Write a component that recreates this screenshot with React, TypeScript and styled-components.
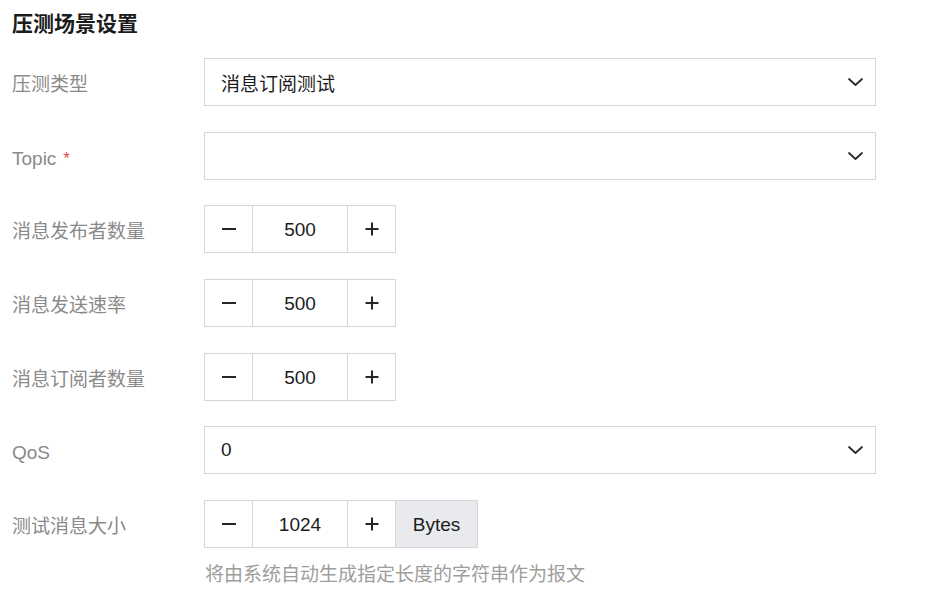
import React from "react";
import styled, { createGlobalStyle } from "styled-components";

const Global = createGlobalStyle`
  html, body { margin: 0; padding: 0; background: #ffffff; }
  body {
    font-family: "Liberation Sans", "Noto Sans CJK SC", sans-serif;
    -webkit-font-smoothing: antialiased;
  }
  * { box-sizing: border-box; }
`;

const Page = styled.div`
  width: 944px;
  height: 610px;
  padding: 9px 0 0 12px;
  background: #fff;
  overflow: hidden;
`;

const Title = styled.h2`
  margin: 0;
  font-size: 21px;
  line-height: 30px;
  font-weight: 700;
  color: #1b1b1b;
`;

const Form = styled.div`
  display: flex;
  flex-direction: column;
  gap: 25.67px;
  margin-top: 19px;
`;

const Row = styled.div`
  display: grid;
  grid-template-columns: 192px 672px;
  align-items: start;
`;

const Label = styled.div`
  font-size: 19px;
  line-height: 48px;
  height: 48px;
  padding-top: 3px;
  color: #8a8a8a;
  white-space: nowrap;
`;

const Required = styled.span`
  color: #e34d4d;
  margin-left: 7px;
  font-size: 17px;
  vertical-align: 1px;
`;

const Control = styled.div`
  display: flex;
  flex-direction: column;
`;

const Select = styled.div`
  height: 48px;
  width: 672px;
  border: 1px solid #d3d5db;
  display: flex;
  align-items: center;
  justify-content: space-between;
  padding: 0 11px 0 16px;
  font-size: 19px;
  color: #1c1c1c;
  background: #fff;
`;

const Stepper = styled.div`
  display: flex;
  height: 48px;
  border: 1px solid #d3d5db;
  width: max-content;
`;

const StepBtn = styled.div`
  width: 47px;
  height: 46px;
  display: flex;
  align-items: center;
  justify-content: center;
  color: #262626;
`;

const StepValue = styled.div`
  width: 96px;
  height: 46px;
  padding-top: 2px;
  border-left: 1px solid #d3d5db;
  border-right: 1px solid #d3d5db;
  display: flex;
  align-items: center;
  justify-content: center;
  font-size: 19px;
  color: #1c1c1c;
`;

const Addon = styled.div`
  width: 82px;
  height: 46px;
  padding-top: 2px;
  border-left: 1px solid #d3d5db;
  background: #e9eaee;
  display: flex;
  align-items: center;
  justify-content: center;
  font-size: 19px;
  color: #1c1c1c;
`;

const Help = styled.div`
  margin-top: 14px;
  font-size: 19px;
  line-height: 26px;
  color: #9d9d9d;
  padding-left: 1px;
`;

const Chevron = () => (
  <svg width="17" height="10" viewBox="0 0 17 10" fill="none">
    <path d="M2 2 L8.5 8 L15 2" stroke="#2a2a2a" strokeWidth="1.8" strokeLinecap="round" strokeLinejoin="round" />
  </svg>
);

const Minus = () => (
  <svg width="16" height="16" viewBox="0 0 16 16">
    <rect x="1" y="7" width="14" height="2" fill="#262626" />
  </svg>
);

const Plus = () => (
  <svg width="16" height="16" viewBox="0 0 16 16">
    <rect x="1.5" y="7" width="13" height="2" fill="#262626" />
    <rect x="7" y="1.5" width="2" height="13" fill="#262626" />
  </svg>
);

const NumberStepper = ({ value, unit }: { value: string; unit?: string }) => (
  <Stepper>
    <StepBtn><Minus /></StepBtn>
    <StepValue>{value}</StepValue>
    <StepBtn><Plus /></StepBtn>
    {unit && <Addon>{unit}</Addon>}
  </Stepper>
);

export default function App() {
  return (
    <>
      <Global />
      <Page>
        <Title>压测场景设置</Title>
        <Form>
          <Row>
            <Label>压测类型</Label>
            <Control>
              <Select><span>消息订阅测试</span><Chevron /></Select>
            </Control>
          </Row>
          <Row>
            <Label>Topic<Required>*</Required></Label>
            <Control>
              <Select><span></span><Chevron /></Select>
            </Control>
          </Row>
          <Row>
            <Label>消息发布者数量</Label>
            <Control><NumberStepper value="500" /></Control>
          </Row>
          <Row>
            <Label>消息发送速率</Label>
            <Control><NumberStepper value="500" /></Control>
          </Row>
          <Row>
            <Label>消息订阅者数量</Label>
            <Control><NumberStepper value="500" /></Control>
          </Row>
          <Row>
            <Label>QoS</Label>
            <Control>
              <Select><span>0</span><Chevron /></Select>
            </Control>
          </Row>
          <Row>
            <Label>测试消息大小</Label>
            <Control>
              <NumberStepper value="1024" unit="Bytes" />
              <Help>将由系统自动生成指定长度的字符串作为报文</Help>
            </Control>
          </Row>
        </Form>
      </Page>
    </>
  );
}
